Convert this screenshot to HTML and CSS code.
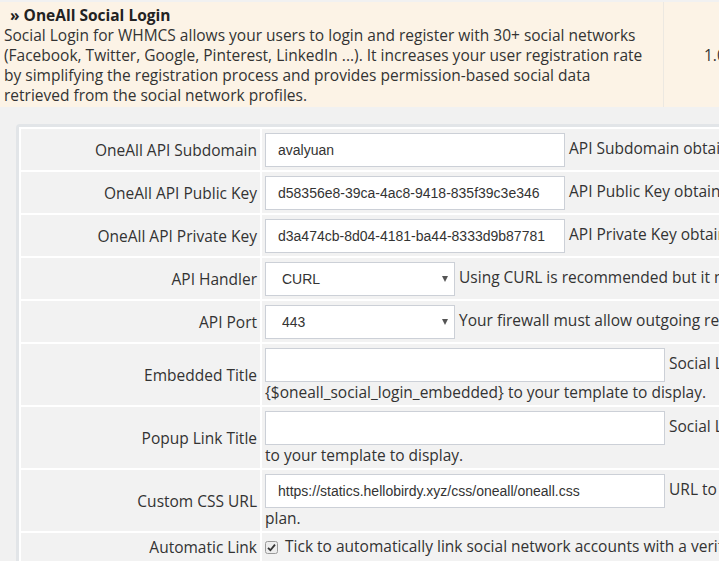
FILE: index.html
```html
<!DOCTYPE html>
<html>
<head>
<meta charset="utf-8">
<link rel="stylesheet" href="styles.css">
</head>
<body>
<div class="page">
  <table class="module">
    <tr>
      <td class="module-info">
        <div class="module-title">» OneAll Social Login</div>
        Social Login for WHMCS allows your users to login and register with 30+ social networks<br>
        (Facebook, Twitter, Google, Pinterest, LinkedIn ...). It increases your user registration rate<br>
        by simplifying the registration process and provides permission-based social data<br>
        retrieved from the social network profiles.
      </td>
      <td class="module-version">1.0.5</td>
    </tr>
  </table>

  <div class="settings">
    <table class="form">
      <tr class="row">
        <td class="fieldlabel">OneAll API Subdomain</td>
        <td class="fieldarea"><input class="text" type="text" value="avalyuan"> API Subdomain obtained from your OneAll account dashboard</td>
      </tr>
      <tr class="row">
        <td class="fieldlabel">OneAll API Public Key</td>
        <td class="fieldarea"><input class="text" type="text" value="d58356e8-39ca-4ac8-9418-835f39c3e346"> API Public Key obtained from your OneAll account dashboard</td>
      </tr>
      <tr class="row">
        <td class="fieldlabel">OneAll API Private Key</td>
        <td class="fieldarea"><input class="text" type="text" value="d3a474cb-8d04-4181-ba44-8333d9b87781"> API Private Key obtained from your OneAll account dashboard</td>
      </tr>
      <tr class="row">
        <td class="fieldlabel">API Handler</td>
        <td class="fieldarea"><span class="select"><select><option>CURL</option><option>FSOCKOPEN</option></select></span> Using CURL is recommended but it might be disabled on some servers</td>
      </tr>
      <tr class="row">
        <td class="fieldlabel">API Port</td>
        <td class="fieldarea"><span class="select"><select><option>443</option><option>80</option></select></span> Your firewall must allow outgoing requests on this port</td>
      </tr>
      <tr class="row tall">
        <td class="fieldlabel">Embedded Title</td>
        <td class="fieldarea"><input class="text wide" type="text" value=""> Social Login title displayed in embedded mode. Add<br>{$oneall_social_login_embedded} to your template to display.</td>
      </tr>
      <tr class="row tall">
        <td class="fieldlabel">Popup Link Title</td>
        <td class="fieldarea"><input class="text wide" type="text" value=""> Social Login link title displayed in popup mode. Add {$oneall_social_login_popup}<br>to your template to display.</td>
      </tr>
      <tr class="row tall">
        <td class="fieldlabel">Custom CSS URL</td>
        <td class="fieldarea"><input class="text wide" type="text" value="https://statics.hellobirdy.xyz/css/oneall/oneall.css"> URL to a custom CSS file, only available with a premium<br>plan.</td>
      </tr>
      <tr class="row short">
        <td class="fieldlabel">Automatic Link</td>
        <td class="fieldarea"><span class="checkbox"><svg width="13" height="13" viewBox="0 0 13 13"><rect x="0.5" y="0.5" width="12" height="12" rx="2" fill="#ededed" stroke="#9a9a9a"/><path d="M3 6.8 L5.4 9.2 L10 3.6" fill="none" stroke="#333" stroke-width="1.8"/></svg></span> Tick to automatically link social network accounts with a verified email address</td>
      </tr>
    </table>
  </div>
</div>
</body>
</html>
```

FILE: styles.css
```css
html, body {
  margin: 0;
  padding: 0;
  overflow: hidden;
}
body {
  background: #f1f1f1;
  font-family: "Open Sans", "Noto Sans", sans-serif;
  font-size: 15.5px;
  color: #333;
}
.page {
  width: 1300px;
  padding-top: 2px;
}
.module {
  border-collapse: collapse;
  background: #fcf3e6;
  width: 1300px;
}
.module-info {
  padding: 3px 4px 2px 4px;
  line-height: 20px;
  width: 655px;
  vertical-align: top;
  white-space: nowrap;
}
.module-title {
  font-weight: bold;
  font-size: 15.5px;
  color: #222;
  padding-left: 6px;
}
.module-version {
  border-left: 1px solid #ece8e1;
  padding-left: 40px;
  vertical-align: middle;
}
.settings {
  margin: 17px 0 0 16px;
  border: 3px solid #e2e5e8;
  border-radius: 4px;
  background: #fff;
}
.form {
  border-spacing: 2px;
  background: #fff;
  width: 1200px;
  table-layout: fixed;
}
.fieldlabel {
  background: #f2f2f2;
  width: 233px;
  text-align: right;
  padding: 3px;
  vertical-align: middle;
  white-space: nowrap;
}
.fieldarea {
  background: #f2f2f2;
  padding: 3px;
  line-height: 20px;
  white-space: nowrap;
  overflow: hidden;
}
.row {
  height: 41px;
}
.row.tall {
  height: 61px;
}
.row.short {
  height: 30px;
}
.text {
  box-sizing: border-box;
  height: 34px;
  width: 300px;
  border: 1px solid #ccd0d7;
  background: #fff;
  padding: 0 12px;
  font-family: "Liberation Sans", Arial, sans-serif;
  font-size: 14px;
  color: #333;
  vertical-align: middle;
  margin: 0;
}
.text.wide {
  width: 400px;
}
.select {
  position: relative;
  display: inline-block;
  vertical-align: middle;
}
.select select {
  appearance: none;
  -webkit-appearance: none;
  box-sizing: border-box;
  width: 190px;
  height: 34px;
  border: 1px solid #ccd0d7;
  background: #fff;
  padding: 0 16px;
  font-family: "Liberation Sans", Arial, sans-serif;
  font-size: 14px;
  color: #333;
  margin: 0;
  display: block;
}
.select::after {
  content: "";
  position: absolute;
  right: 7px;
  top: 14px;
  border-left: 3px solid transparent;
  border-right: 3px solid transparent;
  border-top: 6px solid #555;
}
.checkbox {
  display: inline-block;
  vertical-align: -2px;
  width: 13px;
  height: 13px;
  line-height: 0;
  margin-right: 3px;
}
.row.short .fieldlabel,
.row.short .fieldarea {
  vertical-align: top;
}
```
